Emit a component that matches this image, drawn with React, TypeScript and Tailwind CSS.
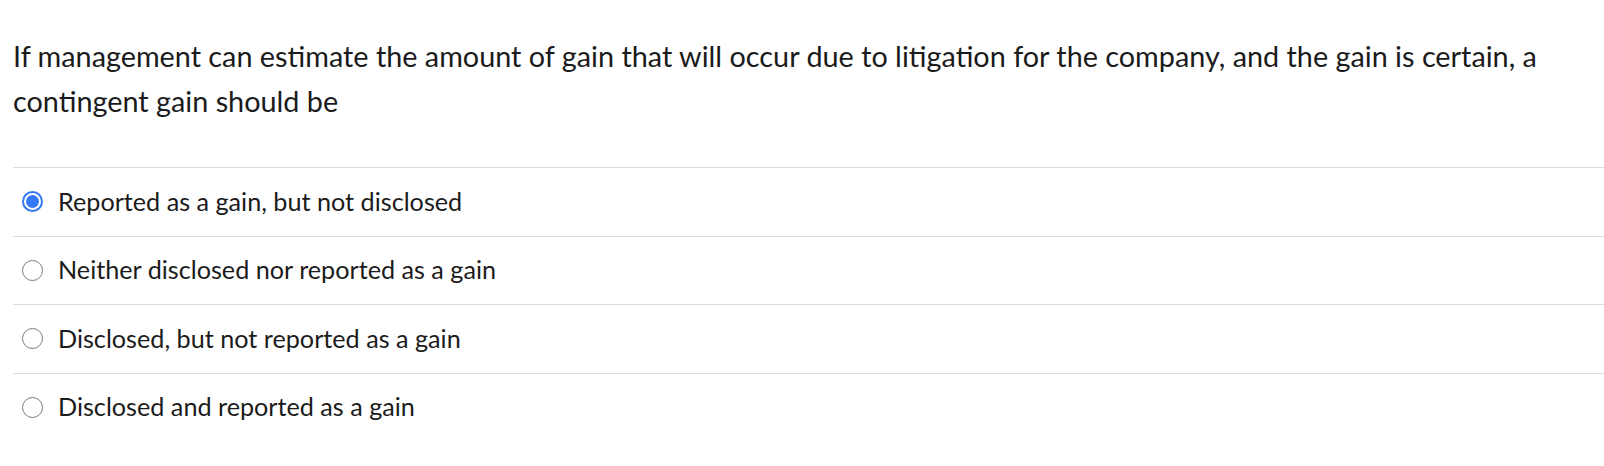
import { useState } from "react";

const options = [
  "Reported as a gain, but not disclosed",
  "Neither disclosed nor reported as a gain",
  "Disclosed, but not reported as a gain",
  "Disclosed and reported as a gain",
];

function Radio({ checked }: { checked: boolean }) {
  if (checked) {
    return (
      <span className="flex h-[21px] w-[21px] shrink-0 items-center justify-center rounded-full border-2 border-[#3478f6] bg-white">
        <span className="h-[13px] w-[13px] rounded-full bg-[#3478f6]" />
      </span>
    );
  }
  return (
    <span className="h-[21px] w-[21px] shrink-0 rounded-full border-[1.5px] border-[#7a7a7a] bg-white" />
  );
}

export default function App() {
  const [selected, setSelected] = useState(0);

  return (
    <div className="min-h-[466px] bg-white pl-[13px] pt-[34px] font-['Lato','Liberation_Sans',sans-serif] text-[#1b1b1b]">
      <p className="pr-[20px] text-[28.8px] leading-[45px]">
        If management can estimate the amount of gain that will occur due to litigation for the company, and the gain is
        certain, a contingent gain should be
      </p>
      <ul className="mt-[43px]">
        {options.map((opt, i) => (
          <li key={opt} className="border-t border-[#dcdcdc]">
            <label
              className="flex h-[67.5px] cursor-pointer items-center gap-[15px] pl-[9px]"
              onClick={() => setSelected(i)}
            >
              <Radio checked={selected === i} />
              <span className="text-[25.2px]">{opt}</span>
            </label>
          </li>
        ))}
      </ul>
    </div>
  );
}
